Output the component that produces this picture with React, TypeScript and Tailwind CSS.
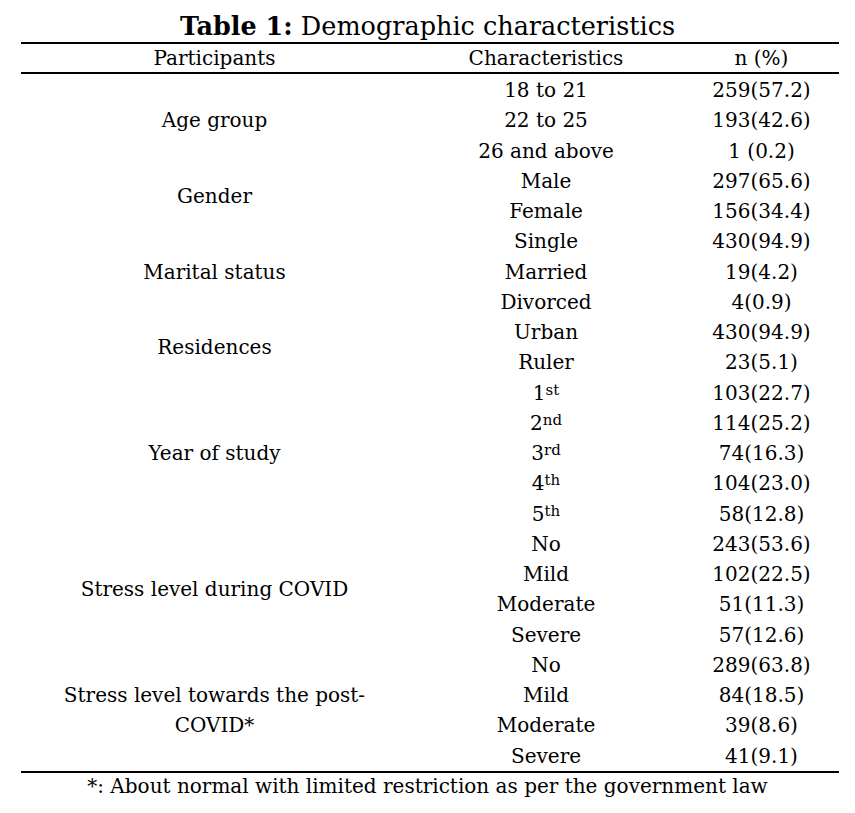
type Item = { c: string; sup?: string; n: string };

const groups: { label: React.ReactNode; items: Item[] }[] = [
  {
    label: "Age group",
    items: [
      { c: "18 to 21", n: "259(57.2)" },
      { c: "22 to 25", n: "193(42.6)" },
      { c: "26 and above", n: "1 (0.2)" },
    ],
  },
  {
    label: "Gender",
    items: [
      { c: "Male", n: "297(65.6)" },
      { c: "Female", n: "156(34.4)" },
    ],
  },
  {
    label: "Marital status",
    items: [
      { c: "Single", n: "430(94.9)" },
      { c: "Married", n: "19(4.2)" },
      { c: "Divorced", n: "4(0.9)" },
    ],
  },
  {
    label: "Residences",
    items: [
      { c: "Urban", n: "430(94.9)" },
      { c: "Ruler", n: "23(5.1)" },
    ],
  },
  {
    label: "Year of study",
    items: [
      { c: "1", sup: "st", n: "103(22.7)" },
      { c: "2", sup: "nd", n: "114(25.2)" },
      { c: "3", sup: "rd", n: "74(16.3)" },
      { c: "4", sup: "th", n: "104(23.0)" },
      { c: "5", sup: "th", n: "58(12.8)" },
    ],
  },
  {
    label: "Stress level during COVID",
    items: [
      { c: "No", n: "243(53.6)" },
      { c: "Mild", n: "102(22.5)" },
      { c: "Moderate", n: "51(11.3)" },
      { c: "Severe", n: "57(12.6)" },
    ],
  },
  {
    label: (
      <>
        Stress level towards the post-
        <br />
        COVID*
      </>
    ),
    items: [
      { c: "No", n: "289(63.8)" },
      { c: "Mild", n: "84(18.5)" },
      { c: "Moderate", n: "39(8.6)" },
      { c: "Severe", n: "41(9.1)" },
    ],
  },
];

const spans: Record<number, string> = {
  2: "row-span-2",
  3: "row-span-3",
  4: "row-span-4",
  5: "row-span-5",
};

export default function App() {
  return (
    <div className="min-h-[813px] w-[855px] bg-white text-black font-['DejaVu_Serif',serif] text-[20px]">
      {/* Title */}
      <div className="h-[42px] flex items-end justify-center pb-[3px] text-[25.5px] leading-none">
        <span>
          <b>Table 1:</b> Demographic characteristics
        </span>
      </div>

      <div className="mx-[21px] w-[818px]">
        {/* Header */}
        <div className="grid grid-cols-[387px_276px_155px] border-y-2 border-black h-[32px] items-center text-center leading-none">
          <div>Participants</div>
          <div>Characteristics</div>
          <div>n (%)</div>
        </div>

        {/* Body */}
        <div className="grid grid-cols-[387px_276px_155px] auto-rows-[30.26px] pt-[1px] text-center leading-[30px] border-b-2 border-black">
          {groups.map((g, gi) => (
            <div key={gi} className="contents">
              <div className={`${spans[g.items.length]} flex items-center justify-center`}>
                <div className="leading-[30px]">{g.label}</div>
              </div>
              {g.items.map((it, ii) => (
                <div key={ii} className="contents">
                  <div>
                    {it.c}
                    {it.sup && <sup className="text-[15px] relative -top-[5px]">{it.sup}</sup>}
                  </div>
                  <div>{it.n}</div>
                </div>
              ))}
            </div>
          ))}
        </div>
      </div>

      {/* Footnote */}
      <div className="text-center leading-[30px] mt-[-2px]">
        *: About normal with limited restriction as per the government law
      </div>
    </div>
  );
}
